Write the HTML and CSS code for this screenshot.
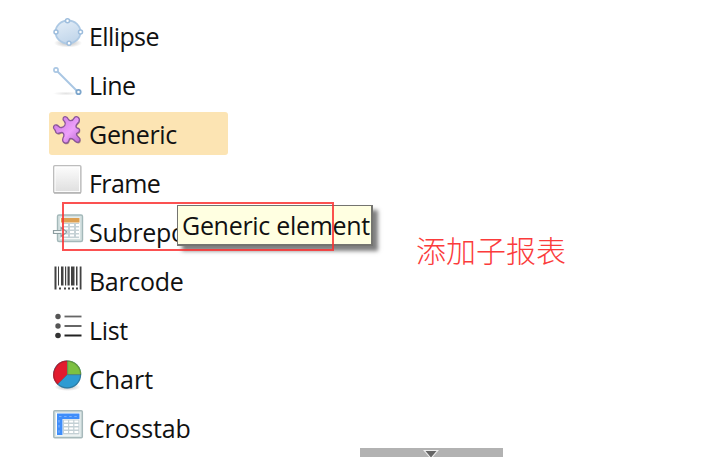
FILE: index.html
```html
<!DOCTYPE html>
<html lang="en">
<head>
<meta charset="utf-8">
<title>Palette</title>
<link rel="stylesheet" href="styles.css">
</head>
<body>
<svg width="0" height="0" class="defs">
  <defs>
    <linearGradient id="blue" x1="0" y1="0" x2="0.4" y2="1"><stop offset="0" stop-color="#e4eef8"/><stop offset="1" stop-color="#c3d7eb"/></linearGradient>
    <linearGradient id="grey" x1="0" y1="0" x2="0" y2="1"><stop offset="0" stop-color="#fdfdfd"/><stop offset="1" stop-color="#dedede"/></linearGradient>
    <radialGradient id="shade"><stop offset="0" stop-color="#999" stop-opacity=".7"/><stop offset="1" stop-color="#999" stop-opacity="0"/></radialGradient>
    <linearGradient id="violet" x1="0" y1="0" x2="1" y2="1"><stop offset="0" stop-color="#c873e0"/><stop offset=".6" stop-color="#eda0fa"/><stop offset="1" stop-color="#b966d0"/></linearGradient>
  </defs>
</svg>
<main class="canvas">
  <ul class="palette">
    <li class="item"><svg class="icon" viewBox="0 0 32 32"><ellipse cx="16" cy="26" rx="14" ry="4.5" fill="url(#shade)"/><ellipse cx="16" cy="15" rx="12.5" ry="11.5" fill="url(#blue)" stroke="#adc9e4" stroke-width="1.8"/><g fill="#fff" stroke="#9dbddd" stroke-width="1.5"><circle cx="15.5" cy="3.7" r="2"/><circle cx="4" cy="15" r="2"/><circle cx="28.5" cy="15" r="2"/><circle cx="17" cy="26.3" r="2"/></g></svg><span class="tight">Ellipse</span></li>
    <li class="item"><svg class="icon" viewBox="0 0 32 32"><ellipse cx="14" cy="27.5" rx="13" ry="2" fill="url(#shade)" opacity=".4"/><path d="M5 5L25 25" stroke="#a9c6e3" stroke-width="2"/><circle cx="4" cy="4" r="2.1" fill="#fff" stroke="#a9c6e3" stroke-width="1.6"/><circle cx="26.5" cy="26" r="2.2" fill="#fff" stroke="#7da6cc" stroke-width="1.8"/></svg><span class="tight">Line</span></li>
    <li class="item active"><svg class="icon" viewBox="0 0 32 32"><path id="puzzle" class="puzzle-shadow" transform="translate(.6 1.2)" d="M12.5 6.5C9.5 4 11.5 1 14 1.8C16.5 2.5 15.5 5 18 5.5C21 6 21.5 4.500 22.500 2.500C24.500 0 28.500 3 27 6.500C26 8.500 23.500 9 24 12C25 14 26.500 12.500 27.500 14.500C28.200 17 26 17.500 24.500 18.500C23.500 20.500 27 21.500 28 24C28.500 27.500 25.500 28 23.500 26.500C21.500 25 20.500 22.500 18 23.500C16.500 24.500 17.500 27.500 14.500 28C11 28.500 10 25.500 11 23C12.500 20.500 12.500 19 10.500 17.500C8.500 16.500 7.500 19.500 4.500 18C3 17 4 15.500 2.500 14.500C.5 13 1.500 9.500 4.500 10C7 10.500 7 13 9.500 12.500C12.500 12 14.500 9 12.500 6.500Z"/><path d="M12.500 6.500C9.500 4 11.500 1 14 1.800C16.500 2.500 15.500 5 18 5.500C21 6 21.500 4.500 22.500 2.500C24.500 0 28.500 3 27 6.500C26 8.500 23.500 9 24 12C25 14 26.500 12.500 27.500 14.500C28.200 17 26 17.500 24.500 18.500C23.500 20.500 27 21.500 28 24C28.500 27.500 25.500 28 23.500 26.500C21.500 25 20.500 22.500 18 23.500C16.500 24.500 17.500 27.500 14.500 28C11 28.500 10 25.500 11 23C12.500 20.500 12.500 19 10.500 17.500C8.500 16.500 7.500 19.500 4.500 18C3 17 4 15.500 2.500 14.500C.5 13 1.500 9.500 4.500 10C7 10.500 7 13 9.500 12.500C12.500 12 14.500 9 12.500 6.500Z" fill="url(#violet)" stroke="#8a5698" stroke-width="1.3"/></svg><span class="snug">Generic</span></li>
    <li class="item"><svg class="icon" viewBox="0 0 32 32"><rect x="1.8" y="1.8" width="27" height="27" rx="1" fill="url(#grey)" stroke="#bdbdbd" stroke-width="1.6"/><rect x="3" y="3" width="24.6" height="24.6" fill="none" stroke="#fff"/><path d="M2 29H29" stroke="#a8a8a8"/></svg><span class="tight">Frame</span></li>
    <li class="item"><svg class="icon" viewBox="0 0 32 32"><rect x="5.5" y="2" width="25" height="26.5" rx="1.5" fill="#d5e1e1" stroke="#a3b8b9" stroke-width="1.4"/><rect x="8" y="4.5" width="20" height="21.5" fill="#f8faf9"/><rect x="9" y="5" width="18.5" height="4.5" fill="#dda052"/><path d="M10 10H27V25H10Z" fill="#c5d1d5"/><path d="M11 12H16M18 12H22M24 12H27M11 15.5H16M18 15.5H22M24 15.5H27M11 19H16M18 19H22M24 19H27M11 22.500H16M18 22.500H22M24 22.500H27" stroke="#fff" stroke-width="2"/><path d="M1.500 17.500H9V14.500L15 19L9 23.500V20.500H1.500Z" fill="#f2f6f6" stroke="#8d9da0" stroke-width="1.2"/></svg><span class="snug">Subreport</span></li>
    <li class="item"><svg class="icon" viewBox="0 0 32 32"><g fill="#424242"><path d="M2.500 4.500h2v23h-2zM6 4.500h1v19h-1zM9 4.500h2.500v19H9zM13 4.500h1.200v19H13zM15.500 4.500h2.200v19h-2.200zM19 4.500h3.500v19H19zM24 4.500h1.500v19H24zM27.700 4.500h1.800v23h-1.800z"/><path d="M7 25.500h2v2H7zM12 25.500h2v2h-2zM16 25.500h2v2h-2zM20 25.500h2v2h-2zM24 25.500h2v2h-2z"/></g></svg><span class="snug">Barcode</span></li>
    <li class="item"><svg class="icon" viewBox="0 0 32 32"><g fill="#555"><circle cx="6" cy="5.500" r="2.700"/><circle cx="6" cy="15" r="2.700"/><circle cx="6" cy="24.500" r="2.800" fill="#333"/></g><path d="M12.500 5.500H29.500" stroke="#666" stroke-width="1.800"/><path d="M12.500 15H29.500" stroke="#555" stroke-width="1.800"/><path d="M12.500 24.500H29.500" stroke="#222" stroke-width="2"/></svg><span class="snug">List</span></li>
    <li class="item"><svg class="icon" viewBox="0 0 32 32"><ellipse cx="15.500" cy="27" rx="13" ry="4" fill="url(#shade)"/><circle cx="15.200" cy="14.500" r="14" fill="#2d9bd2"/><path d="M15.200 14.500V.5A14 14 0 0 0 5.300 24.400Z" fill="#e31b2e"/><path d="M15.200 14.500V.5A14 14 0 0 1 29.200 14.500Z" fill="#7cc142"/><path d="M15.700 1V14.700H29M15.200 14.700L5.500 24.400" fill="none" stroke="#555" stroke-opacity=".45"/><circle cx="15.200" cy="14.500" r="13.400" fill="none" stroke="#333" stroke-opacity=".3" stroke-width="1.200"/></svg><span>Chart</span></li>
    <li class="item"><svg class="icon" viewBox="0 0 32 32"><rect x="1.800" y="1.800" width="28.500" height="27" rx="1" fill="#dce7e7" stroke="#a7b9bb" stroke-width="1.500"/><rect x="4" y="4" width="24" height="22.500" fill="#fff"/><path d="M5 4.500H27.500V10H10.500V26H5Z" fill="#3f8efa"/><path d="M11 10.500H27.500V25.500H11Z" fill="#c3d0d5"/><path d="M12 12.500H27M12 16H27M12 19.500H27M12 23H27" stroke="#fff" stroke-width="2.200" stroke-dasharray="4 1.200"/><path d="M7 7.500H27M7 11V25" stroke="#7fb4fd" stroke-width="1.200" stroke-dasharray="2.500 2.600"/></svg><span class="slight">Crosstab</span></li>
  </ul>
  <div class="tooltip">Generic element</div>
  <div class="marker"></div>
  <div class="note" lang="zh-CN">添加子报表</div>
  <div class="splitter"><svg viewBox="0 0 16 9"><path d="M0 2H16L8 11Z" fill="#eee"/><path d="M2.500 3H13.500L8 9.500Z" fill="#666"/></svg></div>
</main>
</body>
</html>
```
FILE: styles.css
```css
body { margin: 0; background: #fff; color: #111; font-family: "Open Sans", "Noto Sans", sans-serif; }
.defs { position: absolute; }
.canvas { position: relative; width: 721px; height: 460px; overflow: hidden; }
.palette { display: flex; flex-direction: column; gap: 6px; width: 179px; margin: 0; padding: 14px 0 0 49px; list-style: none; }
.item { display: flex; align-items: flex-start; gap: 5px; box-sizing: border-box; height: 43px; padding: 3px 0 0 3px; border-radius: 3px; font-size: 25px; line-height: 39px; white-space: nowrap; }
.item.active { background: #fce4b3; }
.tight { letter-spacing: -.6px; }
.snug { letter-spacing: -.3px; }
.slight { letter-spacing: -.15px; }
.icon { flex: none; width: 32px; height: 32px; }
.puzzle-shadow { fill: #5c3a50; opacity: .5; }
.tooltip { position: absolute; left: 177px; top: 205px; box-sizing: border-box; width: 196px; height: 41px; padding-left: 4px; background: #ffffe1; border: 2px solid #747470; border-width: 1px 2px 2px 1px; box-shadow: 5px 5px 4px rgba(0, 0, 0, .5); font-size: 25px; letter-spacing: -.3px; line-height: 39px; white-space: nowrap; }
.marker { position: absolute; left: 62px; top: 202px; box-sizing: border-box; width: 272px; height: 49px; border: 2px solid rgba(250, 50, 50, .85); }
.note { position: absolute; left: 416px; top: 227px; color: #fb3b3b; font: 300 30px/44px "Noto Sans CJK SC", sans-serif; white-space: nowrap; }
.splitter { position: absolute; left: 360px; top: 448px; width: 143px; height: 9px; background: #b2b2b2; }
.splitter svg { display: block; width: 16px; height: 9px; margin-left: 63px; }
```
